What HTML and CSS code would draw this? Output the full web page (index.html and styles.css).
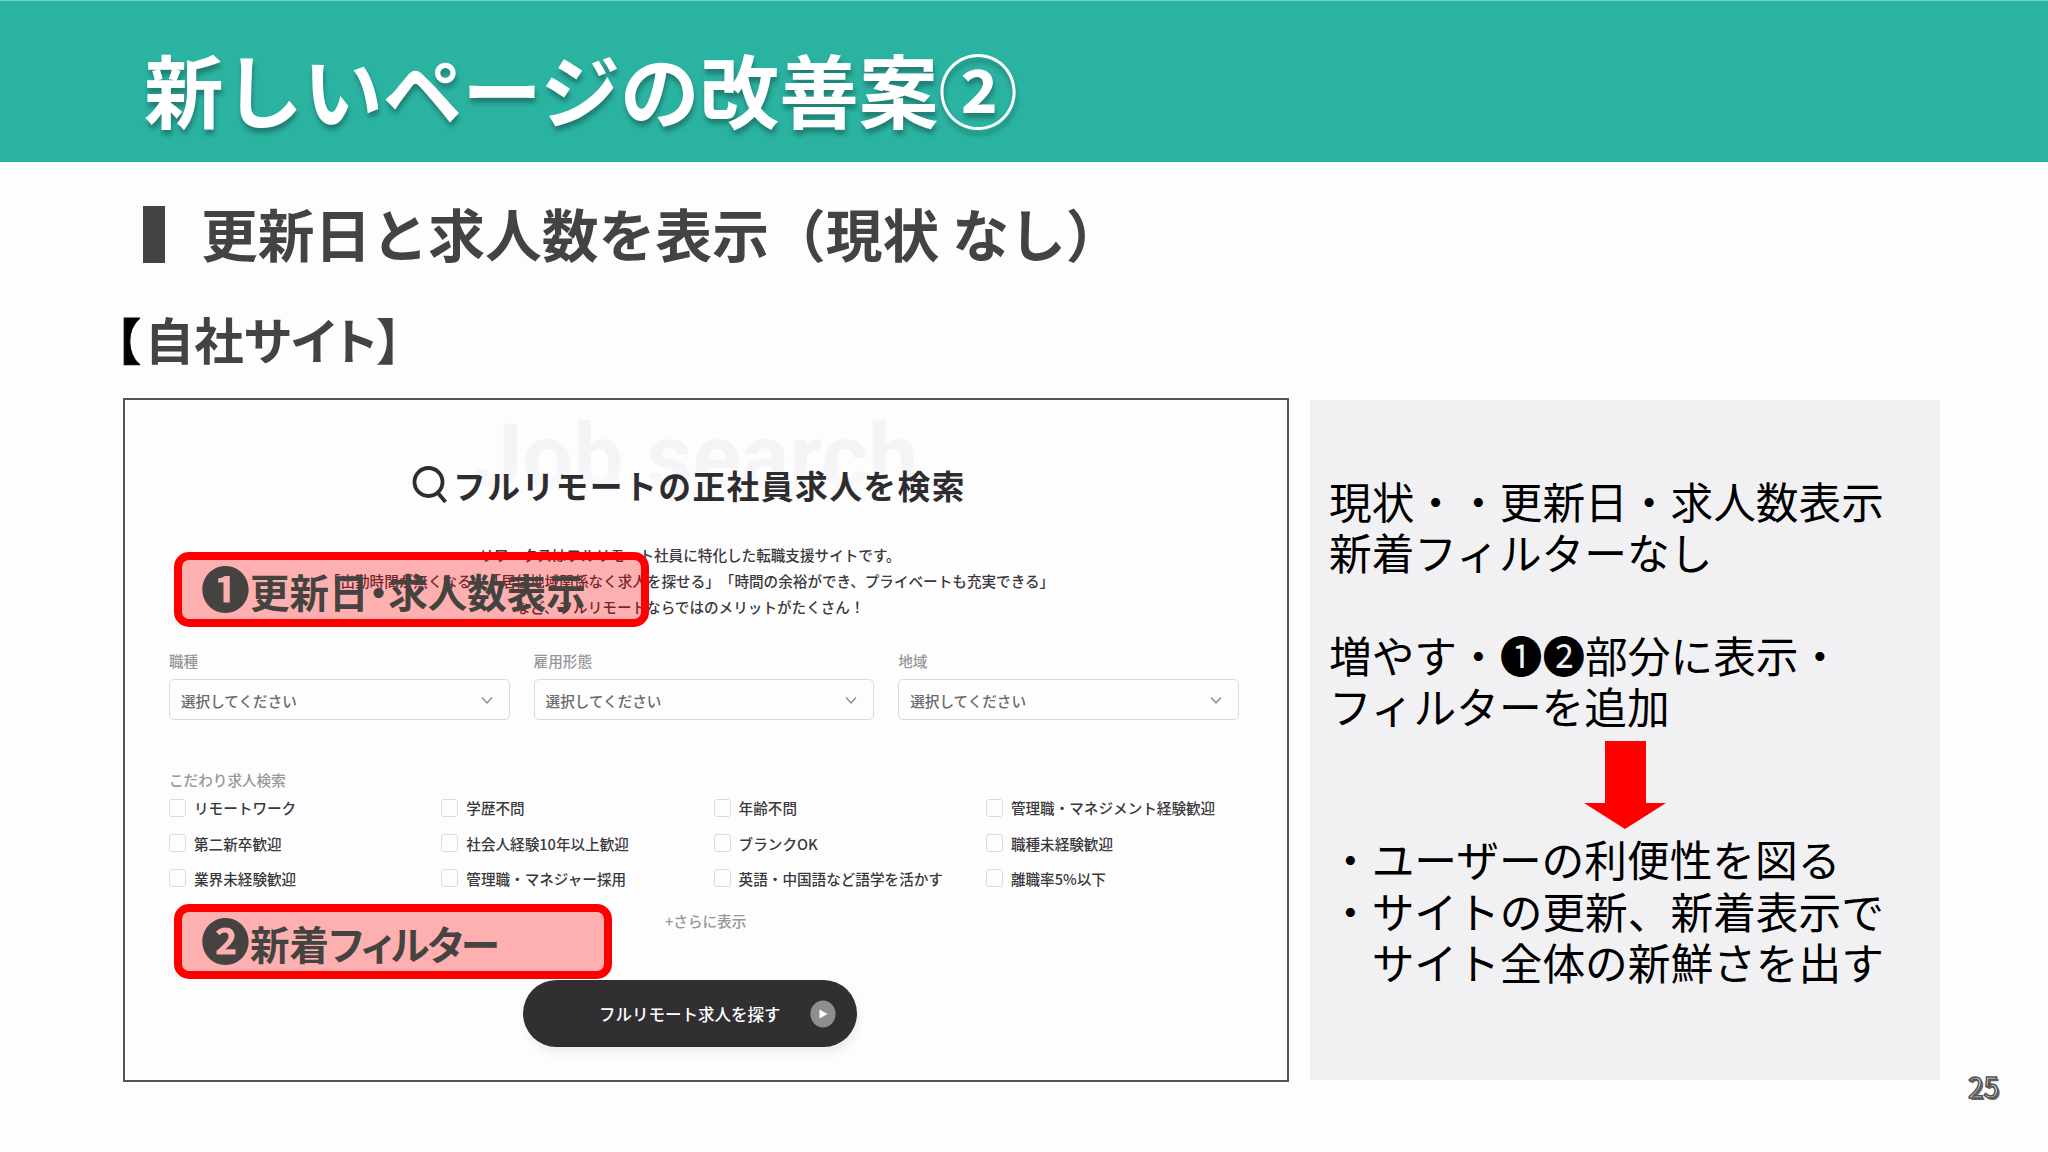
FILE: index.html
```html
<!DOCTYPE html>
<html lang="ja">
<head>
<meta charset="UTF-8">
<title>新しいページの改善案②</title>
<link rel="stylesheet" href="styles.css">
</head>
<body>
    <header class="header">
        <h1>新しいページの改善案②</h1>
    </header>

    <h2 class="subtitle"><span class="bar"></span>更新日と求人数を表示（現状 なし）</h2>
    <h3 class="site-label"><span class="black">【</span>自社サイト】</h3>

    <main class="content">
        <section class="site">
            <div class="watermark">Job search</div>
            <div class="site-title">
                <svg width="36" height="40" viewBox="0 0 36 40" fill="none" stroke="#2f2c30" stroke-width="3.8">
                    <circle cx="16.5" cy="18" r="14"/>
                    <path d="M25.5 28.5l8 9.5"/>
                </svg>
                <span>フルリモートの正社員求人を検索</span>
            </div>
            <p class="lead">リワークスはフルリモート社員に特化した転職支援サイトです。<br>「出勤時間が無くなる」「居住地域関係なく求人を探せる」「時間の余裕ができ、プライベートも充実できる」<br>など、フルリモートならではのメリットがたくさん！</p>

            <div class="selects">
                <div class="field">
                    <label>職種</label>
                    <div class="select">選択してください<svg width="12" height="9" viewBox="0 0 12 9"><path d="M1 1.5l5 5.5 5-5.5"/></svg></div>
                </div>
                <div class="field">
                    <label>雇用形態</label>
                    <div class="select">選択してください<svg width="12" height="9" viewBox="0 0 12 9"><path d="M1 1.5l5 5.5 5-5.5"/></svg></div>
                </div>
                <div class="field">
                    <label>地域</label>
                    <div class="select">選択してください<svg width="12" height="9" viewBox="0 0 12 9"><path d="M1 1.5l5 5.5 5-5.5"/></svg></div>
                </div>
            </div>

            <div class="options-label">こだわり求人検索</div>
            <div class="options">
                <div class="option"><i></i>リモートワーク</div>
                <div class="option"><i></i>学歴不問</div>
                <div class="option"><i></i>年齢不問</div>
                <div class="option"><i></i>管理職・マネジメント経験歓迎</div>
                <div class="option"><i></i>第二新卒歓迎</div>
                <div class="option"><i></i>社会人経験10年以上歓迎</div>
                <div class="option"><i></i>ブランクOK</div>
                <div class="option"><i></i>職種未経験歓迎</div>
                <div class="option"><i></i>業界未経験歓迎</div>
                <div class="option"><i></i>管理職・マネジャー採用</div>
                <div class="option"><i></i>英語・中国語など語学を活かす</div>
                <div class="option"><i></i>離職率5%以下</div>
            </div>
            <div class="more">+さらに表示</div>
            <div class="search-button">
                <span>フルリモート求人を探す</span>
                <svg width="26" height="28" viewBox="0 0 26 28">
                    <ellipse cx="13" cy="14" rx="12.6" ry="13.4" fill="#8f8d90"/>
                    <path d="M9.5 9.5v9l8-4.5z" fill="#fff"/>
                </svg>
            </div>

            <div class="mark mark-1"><span class="num">❶</span>更新日・求人数表示</div>
            <div class="mark mark-2"><span class="num">❷</span>新着<span class="kana">フィルター</span></div>
        </section>

        <aside class="notes">
            <p>現状・・更新日・求人数表示<br>新着フィルターなし</p>
            <p>増やす・❶❷部分に表示・<br>フィルターを追加</p>
            <p>・ユーザーの利便性を図る<br>・サイトの更新、新着表示で<br>　サイト全体の新鮮さを出す</p>
            <svg class="arrow" width="82" height="88" viewBox="0 0 82 88"><path d="M21 0h41v62h20L41 88 0 62h21z" fill="#f00"/></svg>
        </aside>
    </main>

    <div class="page-number">25</div>
</body>
</html>
```

FILE: styles.css
```css
* {
    box-sizing: border-box;
}
body {
    margin: 0;
    width: 2048px;
    height: 1152px;
    position: relative;
    overflow: hidden;
    background-color: #fefdfe;
    color: #454246;
    font-family: "Noto Sans CJK JP", sans-serif;
    text-spacing-trim: space-all;
}
h1, h2, h3, p {
    margin: 0;
}
.header {
    height: 162px;
    padding: 32px 0 0 144px;
    background-color: #2bb3a2;
    border-top: 1px solid #6fd6c9;
}
h1 {
    font-size: 79.6px;
    line-height: 110px;
    color: white;
    text-shadow: 1px 5px 5px rgba(0,0,0,0.3);
}
.subtitle {
    display: flex;
    align-items: center;
    height: 80px;
    margin: 30px 0 0 143px;
    font-size: 56.8px;
    line-height: 80px;
}
.bar {
    width: 22px;
    height: 57px;
    margin: 4px 36px 0 0;
    background-color: #454246;
}
.site-label {
    margin: 32px 0 0 120px;
    font-size: 49.5px;
    line-height: 70px;
    font-feature-settings: "palt";
}
.black {
    margin: 0 5px 0 -5px;
    color: black;
    -webkit-text-stroke: 1px black;
}
.content {
    display: flex;
    align-items: flex-start;
    gap: 21px;
    margin: 24px 0 0 123px;
}
.site {
    position: relative;
    width: 1166px;
    height: 684px;
    padding: 0 44px;
    border: 2px solid #555356;
    font-size: 14.6px;
    font-weight: 500;
    color: #3b383c;
}
.watermark {
    position: absolute;
    left: 347px;
    top: 8px;
    font: bold 90px/100px Roboto, sans-serif;
    color: transparent;
    background: linear-gradient(#f4f3f6 55%, #fbfafc 85%);
    -webkit-background-clip: text;
    background-clip: text;
}
.site-title {
    position: relative;
    display: flex;
    align-items: center;
    gap: 5px;
    height: 50px;
    margin: 59px 0 0 243px;
    font-size: 32.8px;
    font-weight: 700;
    letter-spacing: 1.4px;
    color: #2f2c30;
    white-space: nowrap;
}
.lead {
    margin: 33px 0 0;
    width: 1042px;
    line-height: 26px;
    text-align: center;
    white-space: nowrap;
}
.selects {
    display: flex;
    gap: 24px;
    margin-top: 31px;
}
.field {
    width: 340.6px;
}
.field label {
    display: block;
    line-height: 20px;
    margin-bottom: 8px;
    color: #98969a;
}
.select {
    display: flex;
    align-items: center;
    justify-content: space-between;
    height: 41px;
    padding: 2px 16px 0 11px;
    border: 1.5px solid #dcdade;
    border-radius: 5px;
    color: #6a686c;
}
.select svg {
    fill: none;
    stroke: #8a888c;
    stroke-width: 1.3;
}
.options-label {
    margin-top: 50px;
    line-height: 20px;
    color: #98969a;
}
.options {
    display: grid;
    grid-template-columns: repeat(4, 272.3px);
    grid-auto-rows: 35.4px;
    white-space: nowrap;
}
.option {
    display: flex;
    align-items: center;
}
.option i {
    width: 17px;
    height: 18px;
    margin-right: 8px;
    border: 1px solid #dcdade;
    border-radius: 3px;
}
.more {
    margin: 15px 0 0 496px;
    line-height: 20px;
    color: #98969a;
}
.search-button {
    display: flex;
    align-items: center;
    width: 334px;
    height: 67px;
    margin: 49px 0 0 354px;
    padding-left: 76px;
    gap: 29px;
    border-radius: 34px;
    background-color: #322f33;
    box-shadow: 2px 6px 10px rgba(60,40,80,0.08);
    color: white;
    font-size: 16.5px;
}
.mark {
    position: absolute;
    left: 49px;
    height: 75px;
    padding-left: 19px;
    border: 8.5px solid #f00;
    border-radius: 15px;
    background-color: rgba(255,0,0,0.3);
    color: #444340;
    font-size: 39.5px;
    font-weight: 700;
    line-height: 62px;
    font-feature-settings: "palt";
    white-space: nowrap;
}
.mark-1 {
    top: 152px;
    width: 475px;
}
.mark-2 {
    top: 504px;
    width: 438px;
}
.num {
    font-size: 49px;
    line-height: 40px;
}
.kana {
    letter-spacing: -2px;
}
.notes {
    position: relative;
    width: 630px;
    height: 680px;
    margin-top: 2px;
    padding: 75px 0 0 19px;
    background-color: #f1f1f4;
    color: black;
    font-size: 42.7px;
    line-height: 51.2px;
    white-space: nowrap;
}
.notes p {
    margin-bottom: 51.2px;
}
.notes p:nth-child(2) {
    margin-bottom: 102.4px;
}
.arrow {
    position: absolute;
    left: 274px;
    top: 341px;
}
.page-number {
    position: absolute;
    right: 49px;
    top: 1066px;
    font-size: 28px;
    line-height: 40px;
    color: #fff;
    -webkit-text-stroke: 1.6px #555;
    text-shadow: 2px 2px 0 #666;
}
```
